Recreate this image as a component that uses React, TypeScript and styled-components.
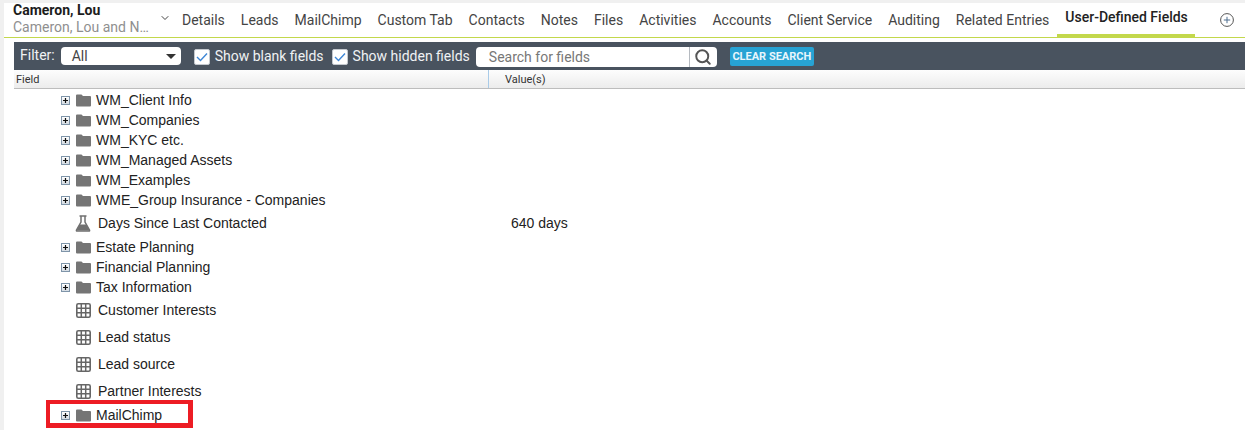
import * as React from "react"
import styled, { createGlobalStyle } from "styled-components"
import { ChevronDown, Search } from "lucide-react"

const GlobalStyle = createGlobalStyle`
  html, body {
    margin: 0;
    padding: 0;
    background: #fff;
    font-family: "Liberation Sans", Arial, sans-serif;
  }
`

const Page = styled.div`
  position: relative;
  width: 1245px;
  height: 430px;
  overflow: hidden;
  box-sizing: border-box;
  padding: 3px 0 0 4px;
  background: #f0f0f0;
`
const Panel = styled.main`
  height: 427px;
  background: #fff;
`
const Header = styled.header`
  display: flex;
  align-items: stretch;
  height: 34px;
  padding-left: 9px;
  border-bottom: 1px solid #c3d84c;
`
const Identity = styled.div`
  width: 146px;
  font-family: Roboto, sans-serif;
`
const Name = styled.div`
  font-size: 14px;
  line-height: 15px;
  font-weight: 700;
  color: #1c1c1c;
`
const SubName = styled.div`
  font-size: 14px;
  line-height: 19px;
  color: #8f8f8f;
`
const Tabs = styled.nav`
  display: flex;
  align-items: stretch;
  flex: 1;
  font-family: Roboto, sans-serif;
  font-size: 14px;
  color: #444;
`
const Tab = styled.div<{ $active?: boolean }>`
  display: flex;
  align-items: center;
  box-sizing: border-box;
  height: 34px;
  padding: ${(p) => (p.$active ? "0 7px 4px 8px" : "0 8px 1px")};
  margin-bottom: -1px;
  color: ${(p) => (p.$active ? "#222" : "#444")};
  font-weight: ${(p) => (p.$active ? 500 : 400)};
  border-bottom: ${(p) => (p.$active ? "3px solid #c3d84c" : "0")};
`
const Toggle = styled.span`
  display: flex;
  align-items: center;
  padding: 0 0 4px;
  margin-right: 3px;
  color: #444;
`
const AddButton = styled.span`
  display: flex;
  align-items: center;
  margin: 0 11px 1px auto;
`
const Content = styled.section`
  margin: 4px 0 0 10px;
`
const Toolbar = styled.div`
  display: flex;
  align-items: flex-start;
  height: 28px;
  padding-left: 6px;
  background: #49535f;
  color: #f0f2f4;
  font-family: Roboto, sans-serif;
  font-size: 14px;
`
const FilterLabel = styled.span`
  margin: 5px 6px 0 0;
`
const Select = styled.div`
  display: flex;
  align-items: center;
  justify-content: space-between;
  box-sizing: border-box;
  width: 120px;
  height: 18px;
  margin: 5px 13px 0 0;
  padding: 0 5px 0 11px;
  background: #fff;
  border-radius: 4px;
  color: #444;
`
const Caret = styled.span`
  width: 0;
  height: 0;
  border-left: 5px solid transparent;
  border-right: 5px solid transparent;
  border-top: 5px solid #333;
`
const CheckLabel = styled.label`
  display: flex;
  align-items: center;
  margin: 5px 8px 0 0;
`
const CheckBox = styled.span`
  display: flex;
  align-items: center;
  justify-content: center;
  box-sizing: border-box;
  width: 16px;
  height: 16px;
  margin: 2px 5px 0 0;
  border: 1px solid #c4c9cf;
  background: #fff;
  border-radius: 2px;
`
const SearchBox = styled.div`
  display: flex;
  align-items: stretch;
  width: 241px;
  height: 20px;
  margin: 5px 13px 0 -2px;
  background: #fff;
  border-radius: 4px;
  overflow: hidden;
`
const SearchText = styled.div`
  flex: 1;
  padding-left: 13px;
  line-height: 21px;
  color: #777;
`
const SearchIcon = styled.div`
  display: flex;
  align-items: center;
  justify-content: center;
  width: 27px;
  border-left: 1px solid #b5bac0;
  color: #555;
`
const ClearButton = styled.div`
  width: 84px;
  height: 19px;
  margin-top: 5px;
  background: #27a3d4;
  border-radius: 2px;
  color: #e8f6fc;
  font-size: 11px;
  font-weight: 700;
  line-height: 19px;
  text-align: center;
`
const ColumnHeader = styled.div`
  display: flex;
  height: 18px;
  border-bottom: 1px solid #bdbdbd;
  background: linear-gradient(#fdfdfd, #ececec);
  font-family: Roboto, sans-serif;
  font-size: 11px;
  line-height: 19px;
  color: #333;
`
const FieldColumn = styled.div`
  box-sizing: border-box;
  width: 475px;
  padding-left: 2px;
  border-right: 1px solid #a9cbe8;
`
const ValueColumn = styled.div`
  padding-left: 16px;
`
const Rows = styled.div`
  padding-top: 1px;
  font-size: 14px;
  color: #222;
`
const FolderRow = styled.div`
  display: flex;
  align-items: center;
  height: 20px;
  padding-left: 47px;
`
const LeafRow = styled.div`
  display: flex;
  align-items: center;
  box-sizing: border-box;
  height: 27px;
  padding: 0 0 1px 48px;
`
const Expander = styled.span`
  display: flex;
  align-items: center;
  justify-content: center;
  box-sizing: border-box;
  width: 9px;
  height: 9px;
  margin-right: 5px;
  border: 1px solid #7f95a9;
  background: linear-gradient(#fff, #d5dce3);
`
const IconSlot = styled.span`
  display: flex;
  align-items: center;
  justify-content: center;
  width: 16px;
  margin-right: 5px;
`
const LeafSlot = styled(IconSlot)`
  margin: 0 7px 0 13px;
`
const RowLabel = styled.span`
  width: 413px;
  white-space: nowrap;
`
const RowValue = styled.span`
  white-space: nowrap;
`
const Highlight = styled.div`
  position: absolute;
  left: 46px;
  top: 400px;
  width: 138px;
  height: 19px;
  border: 4px solid #ed1c24;
  border-right-width: 5px;
  border-bottom-width: 5px;
`

const PlusGlyph = () => (
  <svg width="7" height="7" viewBox="0 0 7 7">
    <path d="M1 3.500h5M3.500 1v5" stroke="#111" strokeWidth="1.200" />
  </svg>
)

const FolderIcon = () => (
  <svg width="15" height="13" viewBox="0 0 15 13">
    <path d="M0 1.500Q0 .5 1 .5h4.500l1.500 1.500H14q1 0 1 1v8.500q0 1-1 1H1q-1 0-1-1z" fill="#757575" />
  </svg>
)

const FlaskIcon = () => (
  <svg width="16" height="17" viewBox="0 0 16 17">
    <path d="M4.500 1h7M6 1v6L1.500 15q-.4 1 .6 1h11.800q1 0 .6-1L10 7V1" fill="none" stroke="#707070" strokeWidth="1.500" />
    <path d="M4.500 9.500h7l3 6H1.500z" fill="#707070" />
  </svg>
)

const GridIcon = () => (
  <svg width="15" height="15" viewBox="0 0 15 15">
    <rect x=".8" y=".8" width="13.400" height="13.400" rx="1.500" fill="none" stroke="#666" strokeWidth="1.600" />
    <path d="M5.300 1v13M9.700 1v13M1 5.300h13M1 9.700h13" stroke="#666" strokeWidth="1.500" />
  </svg>
)

const CheckMark = () => (
  <svg width="12" height="10" viewBox="0 0 12 10">
    <path d="M1 5l3.500 3.500L11 1.500" fill="none" stroke="#3f87d6" strokeWidth="1.400" />
  </svg>
)

const AddIcon = () => (
  <svg width="14" height="14" viewBox="0 0 14 14">
    <circle cx="7" cy="7" r="6.400" fill="none" stroke="#555" strokeWidth="1" />
    <path d="M7 3.800v6.400M3.800 7h6.400" stroke="#4f6f8f" strokeWidth="1" />
  </svg>
)

type RowInfo = { label: string; kind: "folder" | "flask" | "grid"; value?: string }

const rows: RowInfo[] = [
  { label: "WM_Client Info", kind: "folder" },
  { label: "WM_Companies", kind: "folder" },
  { label: "WM_KYC etc.", kind: "folder" },
  { label: "WM_Managed Assets", kind: "folder" },
  { label: "WM_Examples", kind: "folder" },
  { label: "WME_Group Insurance - Companies", kind: "folder" },
  { label: "Days Since Last Contacted", kind: "flask", value: "640 days" },
  { label: "Estate Planning", kind: "folder" },
  { label: "Financial Planning", kind: "folder" },
  { label: "Tax Information", kind: "folder" },
  { label: "Customer Interests", kind: "grid" },
  { label: "Lead status", kind: "grid" },
  { label: "Lead source", kind: "grid" },
  { label: "Partner Interests", kind: "grid" },
  { label: "MailChimp", kind: "folder" },
]

const tabs = [
  "Details",
  "Leads",
  "MailChimp",
  "Custom Tab",
  "Contacts",
  "Notes",
  "Files",
  "Activities",
  "Accounts",
  "Client Service",
  "Auditing",
  "Related Entries",
]

export default function App() {
  return (
    <Page>
      <GlobalStyle />
      <Panel>
        <Header>
          <Identity>
            <Name>Cameron, Lou</Name>
            <SubName>Cameron, Lou and N…</SubName>
          </Identity>
          <Tabs>
            <Toggle>
              <ChevronDown size={12} />
            </Toggle>
            {tabs.map((t) => (
              <Tab key={t}>{t}</Tab>
            ))}
            <Tab $active>User-Defined Fields</Tab>
            <AddButton>
              <AddIcon />
            </AddButton>
          </Tabs>
        </Header>
        <Content>
          <Toolbar>
            <FilterLabel>Filter:</FilterLabel>
            <Select>
              All
              <Caret />
            </Select>
            <CheckLabel>
              <CheckBox>
                <CheckMark />
              </CheckBox>
              Show blank fields
            </CheckLabel>
            <CheckLabel>
              <CheckBox>
                <CheckMark />
              </CheckBox>
              Show hidden fields
            </CheckLabel>
            <SearchBox>
              <SearchText>Search for fields</SearchText>
              <SearchIcon>
                <Search size={18} strokeWidth={2.6} />
              </SearchIcon>
            </SearchBox>
            <ClearButton>CLEAR SEARCH</ClearButton>
          </Toolbar>
          <ColumnHeader>
            <FieldColumn>Field</FieldColumn>
            <ValueColumn>Value(s)</ValueColumn>
          </ColumnHeader>
          <Rows>
            {rows.map((r) =>
              r.kind === "folder" ? (
                <FolderRow key={r.label}>
                  <Expander>
                    <PlusGlyph />
                  </Expander>
                  <IconSlot>
                    <FolderIcon />
                  </IconSlot>
                  <RowLabel>{r.label}</RowLabel>
                </FolderRow>
              ) : (
                <LeafRow key={r.label}>
                  <LeafSlot>{r.kind === "flask" ? <FlaskIcon /> : <GridIcon />}</LeafSlot>
                  <RowLabel>{r.label}</RowLabel>
                  {r.value && <RowValue>{r.value}</RowValue>}
                </LeafRow>
              )
            )}
          </Rows>
        </Content>
      </Panel>
      <Highlight />
    </Page>
  )
}
